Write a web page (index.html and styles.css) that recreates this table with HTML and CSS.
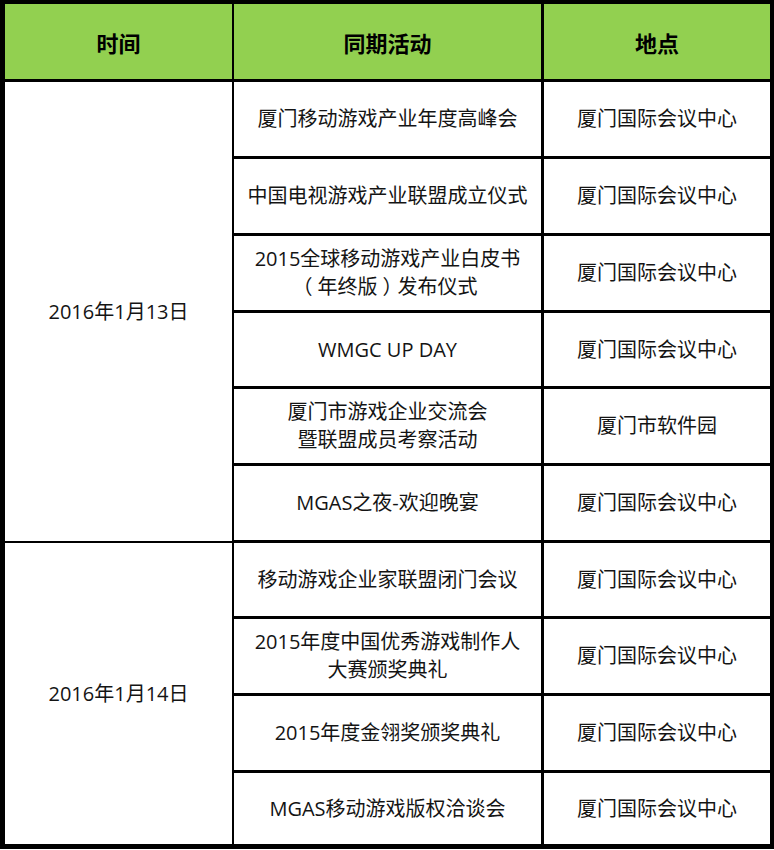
FILE: index.html
```html
<!DOCTYPE html>
<html lang="zh-CN">
<head>
<meta charset="utf-8">
<title>同期活动</title>
<link rel="stylesheet" href="styles.css">
</head>
<body>
<table class="schedule">
  <colgroup>
    <col class="c-time">
    <col class="c-event">
    <col class="c-place">
  </colgroup>
  <thead>
    <tr class="head">
      <th class="col1">时间</th>
      <th class="col2">同期活动</th>
      <th class="col3">地点</th>
    </tr>
  </thead>
  <tbody>
    <tr class="r74">
      <td class="col1 day1" rowspan="6">2016年1月13日</td>
      <td class="col2">厦门移动游戏产业年度高峰会</td>
      <td class="col3">厦门国际会议中心</td>
    </tr>
    <tr class="r74">
      <td class="col2">中国电视游戏产业联盟成立仪式</td>
      <td class="col3">厦门国际会议中心</td>
    </tr>
    <tr class="r74">
      <td class="col2">2015全球移动游戏产业白皮书<br><span class="paren">（</span>年终版<span class="paren">）</span>发布仪式</td>
      <td class="col3">厦门国际会议中心</td>
    </tr>
    <tr class="r73">
      <td class="col2">WMGC UP DAY</td>
      <td class="col3">厦门国际会议中心</td>
    </tr>
    <tr class="r74">
      <td class="col2">厦门市游戏企业交流会<br>暨联盟成员考察活动</td>
      <td class="col3">厦门市软件园</td>
    </tr>
    <tr class="r74">
      <td class="col2">MGAS之夜-欢迎晚宴</td>
      <td class="col3">厦门国际会议中心</td>
    </tr>
    <tr class="r73">
      <td class="col1 day2" rowspan="4">2016年1月14日</td>
      <td class="col2">移动游戏企业家联盟闭门会议</td>
      <td class="col3">厦门国际会议中心</td>
    </tr>
    <tr class="r74">
      <td class="col2">2015年度中国优秀游戏制作人<br>大赛颁奖典礼</td>
      <td class="col3">厦门国际会议中心</td>
    </tr>
    <tr class="r74">
      <td class="col2">2015年度金翎奖颁奖典礼</td>
      <td class="col3">厦门国际会议中心</td>
    </tr>
    <tr class="r71 last">
      <td class="col2">MGAS移动游戏版权洽谈会</td>
      <td class="col3">厦门国际会议中心</td>
    </tr>
  </tbody>
</table>
</body>
</html>
```

FILE: styles.css
```css
html, body {
  margin: 0;
  padding: 0;
  background: #ffffff;
}

.schedule {
  width: 774px;
  table-layout: fixed;
  border-collapse: separate;
  border-spacing: 0;
  border-style: solid;
  border-color: #000;
  border-width: 4px 4px 5px 5px;
  font-family: "Open Sans", "Noto Sans CJK SC", sans-serif;
  color: #141414;
  font-size: 20px;
  line-height: 28px;
}

.c-time { width: 229px; }
.c-event { width: 310px; }
.c-place { width: 226px; }

.schedule th,
.schedule td {
  padding: 0;
  text-align: center;
  vertical-align: middle;
  border-style: solid;
  border-color: #000;
  border-width: 0 0 3px 0;
  box-sizing: border-box;
}

.schedule .col1 { border-right-width: 2px; }
.schedule .col2 { border-right-width: 3px; }

.head th {
  background: #92d050;
  height: 78px;
  font-size: 22px;
  font-weight: bold;
  color: #000;
  font-family: "Noto Sans CJK SC", sans-serif;
}

.r74 td { height: 77px; }
.r73 td { height: 76px; }
.r71 td { height: 71px; border-bottom-width: 0; }

.schedule td.day1 { border-bottom-width: 2px; }
.schedule td.day2 { border-bottom-width: 0; }

/* full-width parentheses centred in a 1em slot */
.paren {
  font-feature-settings: "halt" 1;
  padding: 0 0.25em;
}
```
